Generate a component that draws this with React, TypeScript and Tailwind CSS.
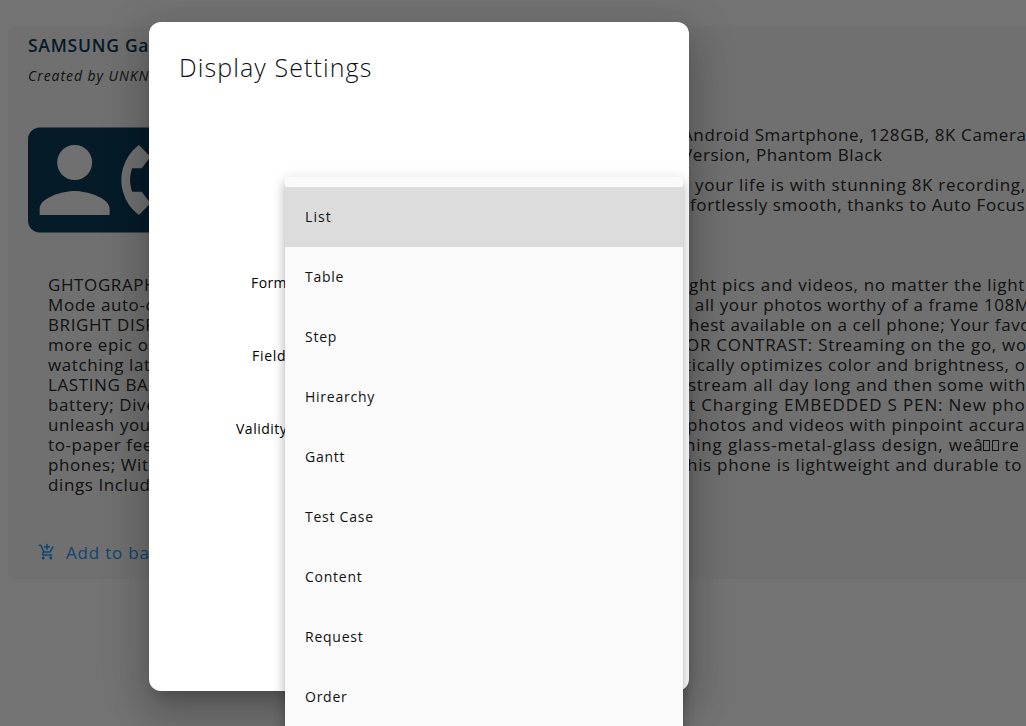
import React from "react";
import { MdAddShoppingCart, MdContactPhone } from "react-icons/md";

const details: { left: string; right: React.ReactNode; indent: string }[] = [
  { left: "GHTOGRAPH", right: "ght pics and videos, no matter the light", indent: "ml-[540px] tracking-[0.7px]" },
  { left: "Mode auto-o", right: "g all your photos worthy of a frame 108M", indent: "ml-[531px] tracking-[0.6px]" },
  { left: "BRIGHT DISP", right: "hest available on a cell phone; Your favo", indent: "ml-[540px] tracking-[0.6px]" },
  { left: "more epic o", right: "OR CONTRAST: Streaming on the go, wo", indent: "ml-[537px] tracking-[0.7px]" },
  { left: "watching lat", right: "tically optimizes color and brightness, o", indent: "ml-[536px] tracking-[0.7px]" },
  { left: "LASTING BA", right: "stream all day long and then some with", indent: "ml-[539px] tracking-[0.7px]" },
  { left: "battery; Dive", right: "st Charging EMBEDDED S PEN: New pho", indent: "ml-[531px] tracking-[0.85px]" },
  { left: "unleash you", right: "photos and videos with pinpoint accura", indent: "ml-[538px] tracking-[0.7px]" },
  {
    left: "to-paper fee",
    right: (
      <>
        ning glass-metal-glass design, weâ
        <span className="mr-[2px] inline-block h-[11px] w-[7px] border border-current" />
        <span className="mr-[2px] inline-block h-[11px] w-[7px] border border-current" />
        re
      </>
    ),
    indent: "ml-[536px] tracking-[0.82px]",
  },
  { left: "phones; Wit", right: "his phone is lightweight and durable to", indent: "ml-[538px] tracking-[0.7px]" },
  { left: "dings Includ", right: "", indent: "ml-[538px]" },
];

const options = ["List", "Table", "Step", "Hirearchy", "Gantt", "Test Case", "Content", "Request", "Order"];

function ProductPage() {
  return (
    <div className="h-full pl-2 pt-[26px]">
      <article className="flex h-[553px] w-[1100px] flex-col rounded-md bg-[#f3f3f3] pl-5">
        <h1 className="mt-[7px] h-6 whitespace-nowrap text-[17.5px] leading-6 font-semibold tracking-[0.75px] text-[#0f3c57]">
          SAMSUNG Ga
        </h1>
        <p className="mt-[9px] h-5 whitespace-nowrap text-[14px] leading-5 tracking-[0.95px] italic">Created by UNKN</p>
        <div className="mt-[24px] flex h-[140px] items-start">
          <MdContactPhone className="size-[140px] shrink-0 text-[#0f3c57]" />
          <div className="ml-[514px] mt-[15px] whitespace-nowrap text-[17px] leading-5 tracking-[0.6px]">
            <p>Android Smartphone, 128GB, 8K Camera</p>
            <p>Version, Phantom Black</p>
            <p className="mt-2.5 pl-[13px] tracking-[0.7px]">your life is with stunning 8K recording,</p>
            <p className="pl-2">fortlessly smooth, thanks to Auto Focus</p>
          </div>
        </div>
        <div className="mt-[25px] pl-5 text-[17px] leading-5 tracking-[0.6px]">
          {details.map((line) => (
            <div key={line.left} className="flex h-5 whitespace-nowrap">
              <span className="w-[101px] shrink-0">{line.left}</span>
              <span className={line.indent}>{line.right}</span>
            </div>
          ))}
        </div>
        <button className="mt-[46px] flex h-6 items-center gap-[10px] pl-2.5 text-left whitespace-nowrap text-[17px] tracking-[0.8px] text-[#2196f3]">
          <MdAddShoppingCart className="mb-0.5 size-[18px]" />
          <span>Add to ba</span>
        </button>
      </article>
    </div>
  );
}

function SettingsDialog() {
  return (
    <section className="ml-[149px] mt-[22px] h-[669px] w-[540px] rounded-xl bg-white shadow-[0_11px_15px_-7px_rgba(0,0,0,0.2),0_24px_38px_3px_rgba(0,0,0,0.14),0_9px_46px_8px_rgba(0,0,0,0.12)]">
      <h2 className="pl-[30px] pt-[27px] text-[25px] leading-9 font-light tracking-[1.1px] text-[#101010]">
        Display Settings
      </h2>
      <div className="mt-[188px] flex flex-col gap-[53px] text-[14px] leading-5 tracking-[0.4px] text-black">
        <span className="pl-[102px]">Form</span>
        <span className="pl-[103px] tracking-[0.7px]">Field</span>
        <span className="pl-[87px] tracking-[0.5px]">Validity</span>
      </div>
    </section>
  );
}

function FormatMenu() {
  return (
    <ul className="absolute left-[285px] top-[177px] h-[600px] w-[398px] rounded-sm bg-[#fafafa] pt-2.5 shadow-[0_5px_5px_-3px_rgba(0,0,0,0.2),0_8px_10px_1px_rgba(0,0,0,0.14),0_3px_14px_2px_rgba(0,0,0,0.12)]">
      {options.map((option, i) => (
        <li
          key={option}
          className={
            "flex h-[60px] items-center pb-0.5 pl-5 text-[14px] text-[#111] " +
            (i === 0 ? "bg-[#dcdcdc] tracking-[1.1px]" : "tracking-[0.75px]")
          }
        >
          {option}
        </li>
      ))}
    </ul>
  );
}

export default function App() {
  return (
    <main className="relative h-[726px] w-[1026px] overflow-hidden bg-[#fafafa] font-['Open_Sans','Noto_Sans',sans-serif] font-normal text-[#2a2a2a]">
      <ProductPage />
      <div className="absolute inset-0 overflow-hidden bg-black/54">
        <SettingsDialog />
        <FormatMenu />
      </div>
    </main>
  );
}
